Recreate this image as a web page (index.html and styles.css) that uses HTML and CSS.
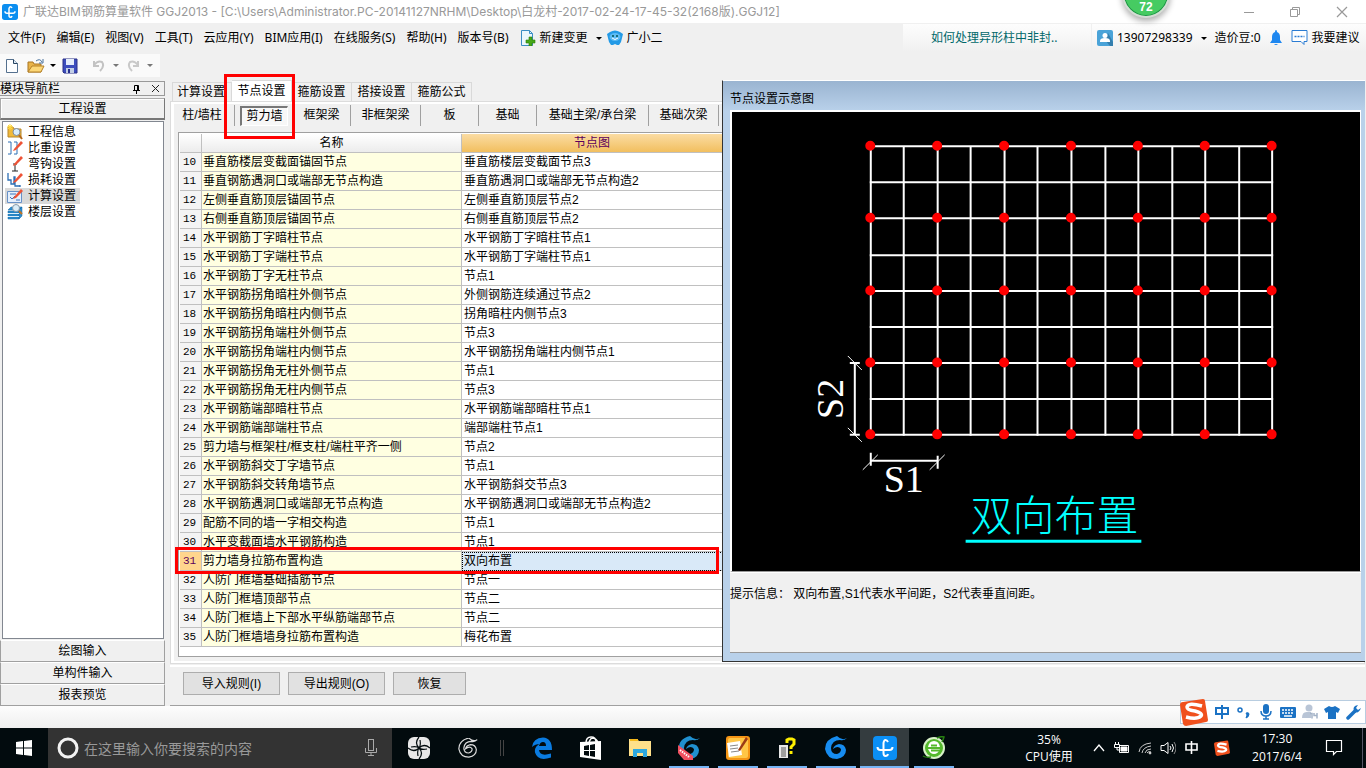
FILE: index.html
```html
<!DOCTYPE html>
<html lang="zh-CN">
<head>
<meta charset="utf-8">
<title>广联达BIM钢筋算量软件 GGJ2013</title>
<link rel="stylesheet" href="styles.css">
</head>
<body>
<div class="app">
  <header class="titlebar">
    <svg class="logo" width="16" height="16" viewBox="0 0 24 24"><rect width="24" height="24" rx="4" fill="#0b8ef0"/><path d="M4.500 11q0 3 3 3h9q3 0 3-3M15 6q-1-2-2.500-2T10.500 7v10q0 3 2 3t2.500-2" fill="none" stroke="#fff" stroke-width="2.200"/></svg>
    <span class="title-text">广联达BIM钢筋算量软件 GGJ2013 - [C:\Users\Administrator.PC-20141127NRHM\Desktop\白龙村-2017-02-24-17-45-32(2168版).GGJ12]</span>
    <div class="win-buttons">
      <button aria-label="最小化"><svg width="12" height="12" viewBox="0 0 12 12"><path d="M1 6.500h10" stroke="#999"/></svg></button>
      <button aria-label="还原"><svg width="12" height="12" viewBox="0 0 12 12" fill="none" stroke="#999"><path d="M1.500 3.500h7v7h-7zM3.500 3V1.500h7v7H9"/></svg></button>
      <button aria-label="关闭"><svg width="12" height="12" viewBox="0 0 12 12"><path d="M1 1l10 10M11 1L1 11" stroke="#999" stroke-width="1.200"/></svg></button>
    </div>
    <div class="ball">72</div>
  </header>

  <nav class="menubar">
    <button>文件(F)</button><button>编辑(E)</button><button>视图(V)</button><button>工具(T)</button><button>云应用(Y)</button><button>BIM应用(I)</button><button>在线服务(S)</button><button>帮助(H)</button><button>版本号(B)</button>
    <button class="with-icon"><svg width="16" height="16" viewBox="0 0 16 16"><path d="M1.500.500h8l3 3v12h-11z" fill="#eaf6fd" stroke="#3a8dc4"/><path d="M9.500.500v3h3" fill="none" stroke="#3a8dc4"/><path d="M9 7h3v3h3v3h-3v3H9v-3H6v-3h3z" fill="#46a818" stroke="#2b7d08" stroke-width=".6"/></svg>新建变更<i class="caret"></i></button>
    <button class="with-icon helper"><svg width="16" height="16" viewBox="0 0 16 16"><path d="M3 2q5-3 10 0l3 2-1 4-1 4-2 3-2 0-2-1-2 1-2 0-2-3-1-4-1-4z" fill="#239ae6"/><ellipse cx="8" cy="7" rx="5.500" ry="4" fill="#5dbcf5"/><circle cx="6" cy="6" r="1" fill="#055"/><circle cx="10" cy="6" r="1" fill="#055"/><path d="M5 8q3 3 6 0" stroke="#fff" fill="none"/></svg>广小二</button>
    <div class="news"><a href="#">如何处理异形柱中非封..</a></div>
    <div class="account">
      <button class="with-icon"><svg width="16" height="16" viewBox="0 0 16 16"><rect width="16" height="16" rx="2" fill="#4aa3d8"/><path d="M8 10l5 6h3v-4l-5-9z" fill="#347fae"/><circle cx="8" cy="5.500" r="2.500" fill="#fff"/><path d="M3 11q0-3 5-3t5 3v1H3z" fill="#fff"/></svg><span class="phone">13907298339</span><i class="caret"></i></button>
      <span class="beans">造价豆:0</span>
      <svg width="14" height="16" viewBox="0 0 14 16"><path d="M7 0q1 0 1 2 3 1 3 5v3l2 3H1l2-3V7q0-4 3-5 0-2 1-2M5 14h4q-2 2-4 0" fill="#1e87f0"/></svg>
      <button class="with-icon suggest"><svg width="17" height="16" viewBox="0 0 17 16"><path d="M1 .500h15v11h-3v3l-3-3H1z" fill="#fff" stroke="#2b7cd3"/><path d="M3.500 6.500h10" stroke="#2b7cd3" stroke-width="1.500" stroke-dasharray="2 1"/></svg>我要建议</button>
    </div>
  </nav>

  <div class="toolrow">
    <div class="toolbar">
      <button aria-label="新建"><svg width="16" height="16" viewBox="0 0 16 16"><path d="M2.500 1.500h7l4 4v9h-11z" fill="#fdfeff" stroke="#54708e"/><path d="M9.500 1.500v4h4" fill="#dce9f5" stroke="#274461"/></svg></button>
      <button aria-label="打开"><svg width="18" height="16" viewBox="0 0 18 16"><path d="M1 14V4h5l1 2h7v8z" fill="#e9b44a" stroke="#a87422"/><path d="M1 14l4-6h12l-3 6z" fill="#fcd777" stroke="#b58128"/><path d="M9 3q4-3 6 1M16 1v4h-4" fill="none" stroke="#48719c"/></svg></button><i class="caret"></i>
      <button aria-label="保存"><svg width="16" height="16" viewBox="0 0 16 16"><path d="M1 1h14v14H2l-1-1z" fill="#3c4dbd" stroke="#2a3187"/><path d="M4 1h8v6H4z" fill="#e5edfb"/><path d="M4 10h8v5H4z" fill="#c3cfe6"/><path d="M6 11h2v4H6z" fill="#26308c"/></svg></button>
      <span class="vline"></span>
      <button aria-label="撤销"><svg width="14" height="14" viewBox="0 0 14 14"><path d="M2 2v5h5M2 6q4-5 8-3 3 4-2 9" fill="none" stroke="#c3c3c3" stroke-width="2"/></svg></button><i class="caret dim"></i>
      <button aria-label="重做"><svg width="14" height="14" viewBox="0 0 14 14"><path d="M12 2v5H7M12 6Q8 1 4 3q-3 4 2 9" fill="none" stroke="#c9c9c9" stroke-width="2"/></svg></button><i class="caret dim"></i>
    </div>
  </div>

  <main class="workspace">
    <aside class="navigator">
      <div class="nav-title"><span>模块导航栏</span><svg width="9" height="10" viewBox="0 0 9 10"><path d="M2.500 6V1.500h4V6M1 6.500h7M4.500 6v4M5.500 2v4" fill="none" stroke="#000"/></svg><svg width="9" height="9" viewBox="0 0 9 9"><path d="M1 1l7 7M8 1L1 8" stroke="#222"/></svg></div>
      <button class="nav-head">工程设置</button>
      <ul class="tree">
        <li><svg width="16" height="16" viewBox="0 0 16 16"><path d="M1 3h5l1 2h7v8H1z" fill="#f0b93a" stroke="#b8862a"/><path d="M3 0v6M0 3h6M1 1l4 4M5 1L1 5" stroke="#ffd93b"/><circle cx="9.500" cy="8" r="3.500" fill="#d7ecfb" stroke="#7d8a9c"/><path d="M12 11l3 4" stroke="#b4691b" stroke-width="2"/></svg><span>工程信息</span></li>
        <li><svg width="16" height="16" viewBox="0 0 16 16"><path d="M1 2h3v12H1M7 2h3v12H7" fill="none" stroke="#2d6fb5"/><path d="M7 9l7-8 2 2-7 7-3 1z" fill="#ee5336"/></svg><span>比重设置</span></li>
        <li><svg width="16" height="16" viewBox="0 0 16 16"><path d="M6 8h4M8 8v7M5 15h6" fill="none" stroke="#222"/><path d="M7 8l7-8 2 2-7 7-3 1z" fill="#ee5336"/></svg><span>弯钩设置</span></li>
        <li><svg width="16" height="16" viewBox="0 0 16 16"><path d="M1 1v7h3v4h3V5h1v9h5M13 13v2" fill="none" stroke="#2d6fb5" stroke-width="1.300"/><path d="M7 9l7-8 2 2-7 7-3 1z" fill="#ee5336"/></svg><span>损耗设置</span></li>
        <li class="current"><svg width="16" height="16" viewBox="0 0 16 16"><path d="M.500 3.500h14v11H.500z" fill="#e4effd" stroke="#6791c8"/><path d="M3 6h6M3 9l2 2 3-3M9 12h4" fill="none" stroke="#3d74bc"/><path d="M7 9l7-8 2 2-7 7-3 1z" fill="#ee5336"/></svg><span>计算设置</span></li>
        <li><svg width="16" height="16" viewBox="0 0 16 16"><path d="M1 6l3-3h11l-3 3zM1 7h11v2H1zM1 10h11v2H1zM1 13h11v2H1zM12 6l3-3v9l-3 3z" fill="#2c8fd0" stroke="#1869a4" stroke-width=".5"/><path d="M1 9.500h11M1 12.500h11" stroke="#dff0fa"/><circle cx="9" cy="4" r="3.500" fill="#d9edf9" stroke="#8798a8"/><path d="M12 7l3 3" stroke="#c07426" stroke-width="2"/></svg><span>楼层设置</span></li>
      </ul>
      <button class="nav-foot">绘图输入</button>
      <button class="nav-foot">单构件输入</button>
      <button class="nav-foot">报表预览</button>
    </aside>

    <section class="content">
      <div class="tabs">
        <button>计算设置</button><button class="active">节点设置</button><button>箍筋设置</button><button>搭接设置</button><button>箍筋公式</button>
      </div>
      <div class="page">
        <div class="kinds">
          <button class="w-m first">柱/墙柱</button><button class="w-m pressed"><span>剪力墙</span></button><button class="w-m">框架梁</button><button class="w-l">非框架梁</button><button class="w-m">板</button><button class="w-m">基础</button><button class="w-xl">基础主梁/承台梁</button><button class="w-l">基础次梁</button>
        </div>
        <div class="grid-frame">
          <table class="nodes">
            <colgroup><col class="c-no"><col class="c-name"><col class="c-node"></colgroup>
            <thead><tr><th></th><th>名称</th><th class="hot">节点图</th></tr></thead>
            <tbody>
              <tr><th>10</th><td>垂直筋楼层变截面锚固节点</td><td>垂直筋楼层变截面节点3</td></tr>
              <tr><th>11</th><td>垂直钢筋遇洞口或端部无节点构造</td><td>垂直筋遇洞口或端部无节点构造2</td></tr>
              <tr><th>12</th><td>左侧垂直筋顶层锚固节点</td><td>左侧垂直筋顶层节点2</td></tr>
              <tr><th>13</th><td>右侧垂直筋顶层锚固节点</td><td>右侧垂直筋顶层节点2</td></tr>
              <tr><th>14</th><td>水平钢筋丁字暗柱节点</td><td>水平钢筋丁字暗柱节点1</td></tr>
              <tr><th>15</th><td>水平钢筋丁字端柱节点</td><td>水平钢筋丁字端柱节点1</td></tr>
              <tr><th>16</th><td>水平钢筋丁字无柱节点</td><td>节点1</td></tr>
              <tr><th>17</th><td>水平钢筋拐角暗柱外侧节点</td><td>外侧钢筋连续通过节点2</td></tr>
              <tr><th>18</th><td>水平钢筋拐角暗柱内侧节点</td><td>拐角暗柱内侧节点3</td></tr>
              <tr><th>19</th><td>水平钢筋拐角端柱外侧节点</td><td>节点3</td></tr>
              <tr><th>20</th><td>水平钢筋拐角端柱内侧节点</td><td>水平钢筋拐角端柱内侧节点1</td></tr>
              <tr><th>21</th><td>水平钢筋拐角无柱外侧节点</td><td>节点1</td></tr>
              <tr><th>22</th><td>水平钢筋拐角无柱内侧节点</td><td>节点3</td></tr>
              <tr><th>23</th><td>水平钢筋端部暗柱节点</td><td>水平钢筋端部暗柱节点1</td></tr>
              <tr><th>24</th><td>水平钢筋端部端柱节点</td><td>端部端柱节点1</td></tr>
              <tr><th>25</th><td>剪力墙与框架柱/框支柱/端柱平齐一侧</td><td>节点2</td></tr>
              <tr><th>26</th><td>水平钢筋斜交丁字墙节点</td><td>节点1</td></tr>
              <tr><th>27</th><td>水平钢筋斜交转角墙节点</td><td>水平钢筋斜交节点3</td></tr>
              <tr><th>28</th><td>水平钢筋遇洞口或端部无节点构造</td><td>水平钢筋遇洞口或端部无节点构造2</td></tr>
              <tr><th>29</th><td>配筋不同的墙一字相交构造</td><td>节点1</td></tr>
              <tr><th>30</th><td>水平变截面墙水平钢筋构造</td><td>节点1</td></tr>
              <tr class="selected"><th>31</th><td>剪力墙身拉筋布置构造</td><td>双向布置<i class="mark mark-row"></i></td></tr>
              <tr><th>32</th><td>人防门框墙基础插筋节点</td><td>节点一</td></tr>
              <tr><th>33</th><td>人防门框墙顶部节点</td><td>节点二</td></tr>
              <tr><th>34</th><td>人防门框墙上下部水平纵筋端部节点</td><td>节点二</td></tr>
              <tr><th>35</th><td>人防门框墙墙身拉筋布置构造</td><td>梅花布置</td></tr>
            </tbody>
          </table>
        </div>
      </div>
      <div class="actions"><button>导入规则(I)</button><button>导出规则(O)</button><button class="short">恢复</button></div>
      <i class="mark mark-tab"></i>
    </section>

    <section class="dialog">
      <h2>节点设置示意图</h2>
      <div class="canvas">
        <svg viewBox="732 112 629 459">
          <g stroke="#fff" stroke-width="2" fill="none">
            <path d="M871 146V436M904 146V436M938 146V436M971 146V436M1005 146V436M1038 146V436M1072 146V436M1106 146V436M1139 146V436M1173 146V436M1206 146V436M1240 146V436M1273 146V436"/>
            <path d="M870 146H1274M870 182H1274M870 218H1274M870 255H1274M870 291H1274M870 327H1274M870 363H1274M870 399H1274M870 435H1274"/>
            <path d="M855 363V435M850 363h10M850 435h10M871 461H938M871 453v13M938 456v13"/>
          </g>
          <path d="M848 356l14 14M848 428l14 14M863 470l15-15M930 470l15-15" stroke="#fff"/>
          <g stroke="#f00" stroke-width="10" stroke-linecap="round" stroke-dasharray="0 67">
            <path d="M870.500 145.500H1273M870.500 217.500H1273M870.500 290.500H1273M870.500 362.500H1273M870.500 434.500H1273"/>
          </g>
          <text class="dim-text" x="884" y="492">S1</text>
          <text class="dim-text" transform="translate(843 419) rotate(-90)">S2</text>
          <text class="caption" x="971" y="531">双向布置</text>
          <path d="M966 541.500h176" stroke="#0ff" stroke-width="3"/>
        </svg>
      </div>
      <p class="hint">提示信息： 双向布置,S1代表水平间距，S2代表垂直间距。</p>
    </section>
  </main>

  <div class="statusbar"></div>

  <div class="ime">
    <svg class="ime-logo" width="28" height="28" viewBox="0 0 28 28"><path d="M3 4L23 1q2 0 2 2l3 19q0 2-2 2L6 28q-2 0-3-2L0 7q0-3 3-3z" fill="#f0501d"/><path d="M22 8q-14-4-15 1 0 3 8 4 8 2 6 5-4 4-15 1" fill="none" stroke="#fff" stroke-width="3.500"/></svg>
    <svg width="16" height="16" viewBox="0 0 16 16"><path d="M2 4h12v6H2zM8 1v14" fill="none" stroke="#1b72c4" stroke-width="2"/></svg>
    <svg width="16" height="16" viewBox="0 0 16 16"><circle cx="4" cy="6" r="2" fill="none" stroke="#1b72c4" stroke-width="1.500"/><path d="M10 9q3-1 3 1 0 3-3 4l1-3z" fill="#1b72c4" stroke="#1b72c4"/></svg>
    <svg width="16" height="16" viewBox="0 0 16 16"><rect x="5" y="0" width="6" height="10" rx="3" fill="#1b72c4"/><path d="M3 7q0 5 5 5t5-5M8 12v3M5 15h6" fill="none" stroke="#1b72c4" stroke-width="1.500"/></svg>
    <svg width="16" height="16" viewBox="0 0 16 16"><rect y="3" width="16" height="11" rx="1" fill="#1b72c4"/><path d="M2 6h12M2 9h12" stroke="#fff" stroke-width="1.500" stroke-dasharray="2 1"/><path d="M4 12h8" stroke="#fff" stroke-width="1.500"/></svg>
    <svg width="16" height="16" viewBox="0 0 16 16"><circle cx="7" cy="4" r="3.500" fill="#b9c5d6"/><path d="M0 14q0-7 6-6h3v6z" fill="#b9c5d6"/><path d="M8 9.500h2v5M12 9v2.500h3V9v5.500" fill="none" stroke="#a4b3c7" stroke-width="1.500"/></svg>
    <svg width="16" height="16" viewBox="0 0 16 16"><path d="M5 2q3 2 6 0l5 3-2 4-2-1v7H4V8L2 9 0 5z" fill="#1b72c4"/></svg>
    <svg width="16" height="16" viewBox="0 0 16 16"><path d="M2 14l7-7" stroke="#1b72c4" stroke-width="3.500" stroke-linecap="round"/><path d="M12 1q-6 1-4 6 4 4 7-3l-3 2-2-2z" fill="#1b72c4"/></svg>
  </div>

  <footer class="taskbar">
    <button class="start" aria-label="开始"><svg width="16" height="16" viewBox="0 0 16 16" fill="#fff"><path d="M0 2l7-1v6.500H0zM8 1l8-1v7.500H8zM0 8.500h7V15l-7-1zM8 8.500h8V16l-8-1z"/></svg></button>
    <label class="search"><svg width="22" height="22" viewBox="0 0 22 22"><circle cx="11" cy="11" r="9" fill="none" stroke="#f2f2f2" stroke-width="3"/></svg><input type="text" aria-label="搜索" placeholder="在这里输入你要搜索的内容"><svg width="12" height="18" viewBox="0 0 12 18" fill="none" stroke="#aaa"><rect x="3.500" y=".500" width="5" height="11"/><path d="M.500 9v4.500h11V9M6 13.500V17M3 16.500h6"/></svg></label>
    <div class="apps">
      <button aria-label="风扇"><svg width="22" height="22" viewBox="0 0 22 22"><rect width="22" height="22" rx="6" fill="#e8e8e8"/><path d="M11 11Q6 6 11 0M11 11q5-5 11 0M11 11q5 5 0 11M11 11q-5 5-11 0M3 10q6-1 8 1M12 3q1 6-1 8M19 12q-6 1-8-1M10 19q-1-6 1-8" fill="none" stroke="#020b0e" stroke-width="1.200"/></svg></button>
      <button aria-label="云龙"><svg width="20" height="20" viewBox="0 0 24 24"><path d="M23 2q-5 3-10-2Q1 3 1 13q2 10 12 10 9-2 9-9-1-6-7-6-5 1-6 5 5-4 8 0 0 4-4 5-6 0-6-6 1-8 9-8 4 1 7-2z" fill="none" stroke="#ddd" stroke-width="1.400"/></svg></button>
      <span class="split"></span>
      <button aria-label="Edge"><svg width="20" height="22" viewBox="0 0 20 22"><path d="M0 10Q1 1 11 0.500q9 .5 9 12.500H7q1 7 12 3.500v4Q6 25 3 15.500q-1-6 5-8.500-5 0-8 3zM7 9h7q0-4-3-4t-4 4z" fill="#0a7be0" fill-rule="evenodd"/></svg></button>
      <button aria-label="应用商店"><svg width="22" height="24" viewBox="0 0 22 24"><path d="M6 7q0-6 5-6t5 5M9 7q1-5 4-5 4 1 5 5" fill="none" stroke="#fff" stroke-width="1.500"/><path d="M0 6l21-1v19L0 21z" fill="#fff"/><path d="M4 10l5-1v5H4zM10 9l5-1v6h-5zM4 15h5v5l-5-1zM10 15h5v6l-5-1z" fill="#020b0e"/></svg></button>
      <button aria-label="文件夹"><svg width="22" height="20" viewBox="0 0 22 20"><path d="M0 1h8l2 2h12v15H0z" fill="#ffe08a"/><path d="M1 1h8v2H1z" fill="#f5b91c"/><path d="M4 19v-8h14v8h-4v-4H8v4z" fill="#2ea8e0"/></svg></button>
      <button class="open" aria-label="广联达更新"><svg width="24" height="24" viewBox="0 0 24 24"><path d="M23 2q-5 3-10-2Q1 3 2 13q2 10 12 10 8-2 8-9-1-6-7-6-5 1-6 5 5-4 8 0 0 4-4 5-6 0-6-6 1-8 9-8 4 1 7-2z" fill="#2090cf"/><path d="M1 9l15 11v4H7L1 17z" fill="#f05060"/><path d="M3 14l9 7" stroke="#fff" stroke-width="2" stroke-dasharray="1.500 1"/></svg></button>
      <button class="open" aria-label="记事"><svg width="24" height="24" viewBox="0 0 24 24"><rect width="24" height="24" rx="3" fill="#f59516"/><rect x="2" y="2" width="20" height="20" rx="2" fill="#ffc646"/><path d="M1 7l13-2 2 14-13 2z" fill="#fff"/><path d="M4 10l8-1M4 13l8-1M5 16l8-1" stroke="#888"/><path d="M12 14l8-13 2 2-8 12z" fill="#9b3b15"/></svg></button>
      <button class="open" aria-label="帮助文档"><svg width="18" height="22" viewBox="0 0 18 22"><path d="M1 8h9v13H1z" fill="#e8e8e8"/><path d="M3 11h5M3 13h5M3 15h5M3 17h5M3 19h5" stroke="#555"/><path d="M9 6V3l2-1h3l2 1v4l-3 3v2M13 14v3" fill="none" stroke="#ffef00" stroke-width="3"/></svg></button>
      <button class="open" aria-label="广联达"><svg width="24" height="24" viewBox="0 0 24 24"><path d="M23 2q-5 3-10-2Q1 3 1 13q2 10 12 10 9-2 9-9-1-6-7-6-5 1-6 5 5-4 8 0 0 4-4 5-6 0-6-6 1-8 9-8 4 1 7-2z" fill="#168cf0"/></svg></button>
      <button class="open front" aria-label="钢筋算量"><svg width="24" height="24" viewBox="0 0 24 24"><rect width="24" height="24" rx="4" fill="#0b8ff5"/><path d="M4.500 11q0 3 3 3h9q3 0 3-3M15 6q-1-2-2.500-2T10.500 7v10q0 3 2 3t2.500-2" fill="none" stroke="#fff" stroke-width="2"/></svg></button>
      <button class="open" aria-label="浏览器"><svg width="24" height="24" viewBox="0 0 24 24"><circle cx="12" cy="12" r="10" fill="#54b82c" stroke="#d8f2c8" stroke-width="2"/><path d="M6 11q1-6 6-6t6 6zM6 13h12q-2 5-6 5t-6-5z" fill="#fff"/><path d="M9 9.500h6M9 14.500h10" stroke="#54b82c" stroke-width="2"/><path d="M1 20Q4 22 9 21M15 2q4-2 7-1-1 3-2 5" fill="none" stroke="#268011" stroke-width="1.500"/></svg></button>
    </div>
    <div class="cpu">35%<br>CPU使用</div>
    <div class="tray">
      <svg width="14" height="16" viewBox="0 0 14 16"><path d="M2 11l5-6 5 6" fill="none" stroke="#fff" stroke-width="1.300"/></svg>
      <svg width="16" height="16" viewBox="0 0 16 16" fill="none" stroke="#fff"><path d="M5.500 5.500h9v7h-9z"/><path d="M7 7h6v4H7z" fill="#fff"/><path d="M1.500 2v2M4.500 2v2M.500 4.500h5v3h-5zM3 7v3h2"/></svg>
      <svg width="14" height="16" viewBox="0 0 14 16" fill="none" stroke="#ccc"><path d="M1 12Q2 4 13 3M4 13q1-6 9-7M7 13q1-4 6-4M9 13q1-2 4-1"/><circle cx="12" cy="13" r="1" fill="#fff"/></svg>
      <svg width="16" height="16" viewBox="0 0 16 16" fill="none" stroke="#fff"><path d="M1 5.500h3l4-3v11l-4-3H1zM10 6q2 2 0 4M12 4q3 4 0 8"/><path d="M14 2q4 6 0 12" stroke="#888"/></svg>
      <svg width="16" height="16" viewBox="0 0 16 16"><path d="M2 4h11v6H2zM7.500 1v13" fill="none" stroke="#fff" stroke-width="1.600"/></svg>
      <svg class="tray-s" width="16" height="16" viewBox="0 0 28 28"><path d="M3 4L23 1q2 0 2 2l3 19q0 2-2 2L6 28q-2 0-3-2L0 7q0-3 3-3z" fill="#f0501d"/><path d="M22 8q-14-4-15 1 0 3 8 4 8 2 6 5-4 4-15 1" fill="none" stroke="#fff" stroke-width="4"/></svg>
    </div>
    <div class="clock">17:30<br>2017/6/4</div>
    <button class="notice" aria-label="通知"><svg width="18" height="18" viewBox="0 0 18 18"><path d="M1.500 1.500h15v11h-5l-3 3v-3h-7z" fill="none" stroke="#fff" stroke-width="1.200"/></svg></button>
  </footer>
</div>
</body>
</html>
```
FILE: styles.css
```css
* { box-sizing: border-box; }
body {
  margin: 0;
  background: #f0f0f0;
  color: #000;
  font: 12px/16px "Liberation Sans", "Noto Sans CJK SC", sans-serif;
}
button {
  font: inherit;
  color: inherit;
  border: 0;
  padding: 0;
  margin: 0;
  background: none;
  white-space: nowrap;
}
svg { display: block; flex: none; }
.app {
  position: relative;
  display: flex;
  flex-direction: column;
  height: 100vh;
  overflow: hidden;
}

/* title bar */
.titlebar {
  position: relative;
  display: flex;
  align-items: center;
  height: 23px;
  padding-left: 2px;
  background: #fff;
  color: #999;
}
.title-text {
  flex: 1;
  margin-left: 5px;
  white-space: nowrap;
  font-family: Inter, "Noto Sans CJK SC", sans-serif;
}
.win-buttons { display: flex; }
.win-buttons button {
  display: flex;
  justify-content: center;
  width: 46px;
}
.win-buttons button:last-child { width: 48px; }
.ball {
  position: absolute;
  right: 196px;
  bottom: 5px;
  width: 48px;
  height: 48px;
  padding-top: 27px;
  border: 2px solid #d5dcd5;
  border-radius: 50%;
  background: #46cb62;
  box-shadow: inset 0 0 0 1px #1c9145, 0 3px 6px #0005;
  color: #fff;
  font-weight: bold;
  text-align: center;
}

/* menus */
.menubar {
  display: flex;
  align-items: center;
  height: 30px;
  padding-left: 8px;
  gap: 11px;
  font-family: "Noto Sans", "Noto Sans CJK SC", sans-serif;
}
.with-icon { display: flex; align-items: center; gap: 4px; }
.caret {
  flex: none;
  border: 3px solid transparent;
  border-top-color: #000;
  border-bottom: 0;
  margin: 0 4px;
}
.caret.dim { border-top-color: #777; }
.menubar .helper { margin-left: -10px; }
.news {
  width: 188px;
  height: 28px;
  margin-left: auto;
  padding-left: 28px;
  line-height: 28px;
  background: linear-gradient(#fdfdfd, #f0f0f0);
}
.news a { color: #00686a; text-decoration: none; }
.account {
  display: flex;
  align-items: center;
  height: 28px;
  width: 274px;
  margin-left: -10px;
  padding-left: 5px;
  gap: 8px;
  white-space: nowrap;
  background: linear-gradient(#fdfdfd, #f0f0f0);
}
.account .caret { margin-right: 0; }

/* toolbar */
.toolrow { height: 27px; }
.toolbar {
  display: flex;
  align-items: center;
  width: 160px;
  height: 23px;
  margin-top: 1px;
  padding-left: 4px;
  background: #fafafa;
}
.toolbar button + button { margin-left: 7px; }
.toolbar .caret { margin: 0 6px 0 5px; }
.toolbar .caret.dim { margin: 0 7px; }
.vline { width: 1px; height: 21px; margin: 0 8px 0 6px; background: #999; }

/* workspace */
.workspace {
  position: relative;
  flex: 1;
  display: flex;
  gap: 5px;
  min-height: 0;
}
.navigator {
  display: flex;
  flex-direction: column;
  flex: none;
  width: 165px;
  padding-top: 1px;
}
.nav-title {
  display: flex;
  align-items: center;
  gap: 10px;
  height: 15px;
  margin-bottom: 2px;
  padding-right: 4px;
  border: 1px solid #999;
  border-left: 0;
  line-height: 14px;
}
.nav-title span { flex: 1; }
.nav-head {
  height: 22px;
  border: 1px solid #999;
  border-color: #aaa #777 #777 #aaa;
  border-bottom-width: 2px;
  box-shadow: inset 1px 1px #fff;
}
.tree {
  flex: 1;
  margin: 1px 1px 1px 2px;
  padding: 2px;
  border: 1px solid #828790;
  background: #fff;
  list-style: none;
}
.tree li {
  display: flex;
  align-items: center;
  width: 75px;
  height: 16px;
  padding-left: 2px;
  gap: 5px;
  white-space: nowrap;
}
.tree .current { background: #d9d9d9; }
.nav-foot {
  height: 22px;
  border: 1px solid #a0a0a0;
  border-top-color: #fff;
}

.content {
  position: relative;
  flex: 1;
  display: flex;
  flex-direction: column;
  min-width: 0;
  padding-right: 1px;
}
.tabs {
  display: flex;
  align-items: flex-end;
  height: 21px;
  padding-left: 2px;
}
.tabs button {
  width: 60px;
  height: 19px;
  border: 1px solid #d9d9d9;
  border-left: 0;
  border-bottom: 0;
}
.tabs button:first-child { border-left: 1px solid #d9d9d9; padding-right: 2px; }
.tabs .active { height: 21px; padding-bottom: 1px; background: #fff; }
.page {
  flex: 1;
  display: flex;
  flex-direction: column;
  min-height: 0;
  padding: 2px 4px 6px 4px;
  border: 1px solid #dcdcdc;
  box-shadow: inset 3px 2px #fff, inset -2px -2px #fff;
}
.kinds { display: flex; padding: 1px 0 6px 2px; }
.kinds button {
  height: 21px;
  padding-bottom: 2px;
  border-right: 1px solid #a0a0a0;
}
.kinds .w-m { width: 58px; }
.kinds .w-l { width: 70px; }
.kinds .w-xl { width: 112px; }
.kinds .first { padding-right: 7px; }
.kinds .pressed { border-right: 0; padding: 0 5px 0 5px; }
.pressed span {
  display: block;
  height: 20px;
  border: 1px solid #fff;
  border-top: 2px solid #777;
  border-left: 2px solid #777;
  background: #f7f7f7;
  line-height: 16px;
}
.grid-frame {
  flex: 1;
  margin-left: 3px;
  padding: 1px;
  border: 1px solid #a0a0a0;
  background: #fff;
  min-height: 0;
}
.nodes { border-collapse: separate; border-spacing: 0; table-layout: fixed; width: 543px; }
.c-no { width: 22px; }
.c-name { width: 260px; }
.nodes th, .nodes td {
  height: 19px;
  padding: 0 0 0 1px;
  border-right: 1px solid #c0c0c0;
  border-bottom: 1px solid #c0c0c0;
  line-height: 18px;
  text-align: left;
  white-space: nowrap;
}
.nodes th { padding: 0; font-weight: normal; text-align: center; background: #f4f4f4; }
.nodes tbody th { font-family: "Liberation Mono", monospace; font-size: 11px; padding-right: 2px; }
.nodes thead th { background: linear-gradient(#fff, #ececec); }
.nodes thead .hot { background: linear-gradient(#fbdca3, #f2bf5f); color: #5b005b; }
.nodes td:nth-child(2) { background: #ffffe1; }
.nodes td:nth-child(3) { padding-left: 2px; }
.nodes .selected { position: relative; }
.nodes .selected th { background: #ffd58d; color: #5b005b; }
.nodes .selected td:nth-child(3) { background: #d9e9f8; outline: 1px dotted #000; outline-offset: -1px; }
.actions {
  display: flex;
  align-items: flex-start;
  gap: 8px;
  height: 41px;
  margin-top: 1px;
  padding: 5px 0 0 13px;
  border-top: 2px solid #fff;
  border-bottom: 1px solid #a0a0a0;
}
.actions button {
  width: 97px;
  height: 23px;
  border: 1px solid #adadad;
  background: #e1e1e1;
}
.actions .short { width: 73px; }

/* red call-outs drawn over the screen */
.mark { position: absolute; border: 3px solid #f00; pointer-events: none; }
.mark-tab { left: 54px; top: -6px; width: 71px; height: 65px; }
.mark-row { left: -5px; top: -5px; width: 544px; height: 27px; z-index: 1; }

/* diagram window */
.dialog {
  position: absolute;
  top: 0;
  right: 1px;
  bottom: 44px;
  left: 722px;
  display: flex;
  flex-direction: column;
  padding: 1px 4px 8px 7px;
  border-left: 1px solid #333;
  border-top: 1px solid #fff;
  border-bottom: 1px solid #333;
  background: linear-gradient(#9ab4d1, #b9d1ea 30px);
}
.dialog h2 {
  height: 28px;
  margin: 0;
  font: inherit;
  line-height: 34px;
}
.canvas {
  flex: 1;
  min-height: 0;
  border: 2px solid #fff;
  border-width: 2px 1px 1px 2px;
  border-bottom-color: #999;
  background: #000;
}
.canvas svg { width: 100%; height: 100%; }
.dim-text { font: 38px "Liberation Serif", serif; fill: #fff; }
.caption { font: 300 42px "Noto Sans CJK SC", sans-serif; fill: #0ff; }
.hint {
  height: 81px;
  margin: 0;
  padding: 13px 0 0;
  border-top: 1px solid #fff;
  border-bottom: 1px solid #999;
  background: #f0f0f0;
}

.statusbar { height: 22px; background: linear-gradient(#fdfdfd, #efefef); }

.ime {
  position: absolute;
  right: 0;
  bottom: 44px;
  display: flex;
  align-items: center;
  gap: 6px;
  height: 24px;
  padding-right: 3px;
  border: 1px solid #b8cde0;
  background: #fff;
}
.ime-logo { margin-left: -1px; }

/* taskbar */
.taskbar {
  display: flex;
  height: 40px;
  background: #020b0e;
  color: #fff;
  font-family: "Open Sans", "Noto Sans CJK SC", sans-serif;
}
.start { display: flex; align-items: center; justify-content: center; width: 48px; }
.search {
  display: flex;
  align-items: center;
  width: 344px;
  padding: 0 15px 0 9px;
  gap: 5px;
  background: #333;
}
.search input {
  flex: 1;
  min-width: 0;
  padding: 0;
  border: 0;
  outline: 0;
  background: none;
  color: #fff;
  font: 14px "Noto Sans CJK SC", sans-serif;
}
.search input::placeholder { color: #999; }
.apps { display: flex; padding-left: 2px; }
.apps button {
  display: flex;
  align-items: center;
  justify-content: center;
  width: 49px;
}
.apps .open {
  background: linear-gradient(#76b4f5, #76b4f5) bottom / 40px 2px no-repeat;
}
.apps .front {
  background: linear-gradient(#76b4f5, #76b4f5) bottom / 100% 2px no-repeat #343c3f;
}
.split {
  width: 4px;
  height: 16px;
  margin: 12px 13px 12px 8px;
  border: 1px solid #444;
  border-width: 0 1px;
}
.cpu, .clock { padding-top: 3px; line-height: 17px; text-align: center; white-space: nowrap; }
.cpu { width: 60px; margin-left: auto; }
.tray { display: flex; align-items: center; gap: 8px; margin-left: 13px; }
.tray-s { margin-left: 6px; }
.clock { width: 60px; margin-left: 17px; padding-top: 2px; line-height: 18px; }
.notice {
  display: flex;
  align-items: center;
  width: 56px;
  margin-right: 3px;
  padding-left: 18px;
  border-right: 1px solid #556;
}
```
